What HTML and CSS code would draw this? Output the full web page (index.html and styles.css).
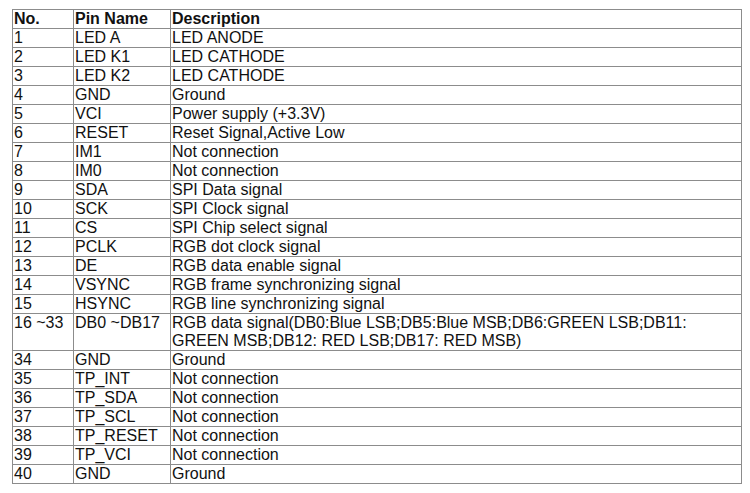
FILE: index.html
```html
<!DOCTYPE html>
<html>
<head>
<meta charset="utf-8">
<link rel="stylesheet" href="styles.css">
</head>
<body>
<div class="page">
<table class="pins">
<colgroup><col class="c-no"><col class="c-name"><col class="c-desc"></colgroup>
<thead>
<tr><th>No.</th><th>Pin Name</th><th>Description</th></tr>
</thead>
<tbody>
<tr><td>1</td><td>LED A</td><td>LED ANODE</td></tr>
<tr><td>2</td><td>LED K1</td><td>LED CATHODE</td></tr>
<tr><td>3</td><td>LED K2</td><td>LED CATHODE</td></tr>
<tr><td>4</td><td>GND</td><td>Ground</td></tr>
<tr><td>5</td><td>VCI</td><td>Power supply (+3.3V)</td></tr>
<tr><td>6</td><td>RESET</td><td>Reset Signal,Active Low</td></tr>
<tr><td>7</td><td>IM1</td><td>Not connection</td></tr>
<tr><td>8</td><td>IM0</td><td>Not connection</td></tr>
<tr><td>9</td><td>SDA</td><td>SPI Data signal</td></tr>
<tr><td>10</td><td>SCK</td><td>SPI Clock signal</td></tr>
<tr><td>11</td><td>CS</td><td>SPI Chip select signal</td></tr>
<tr><td>12</td><td>PCLK</td><td>RGB dot clock signal</td></tr>
<tr><td>13</td><td>DE</td><td>RGB data enable signal</td></tr>
<tr><td>14</td><td>VSYNC</td><td>RGB frame synchronizing signal</td></tr>
<tr><td>15</td><td>HSYNC</td><td>RGB line synchronizing signal</td></tr>
<tr><td>16 ~33</td><td>DB0 ~DB17</td><td>RGB data signal(DB0:Blue LSB;DB5:Blue MSB;DB6:GREEN LSB;DB11:<br>GREEN MSB;DB12: RED LSB;DB17: RED MSB)</td></tr>
<tr><td>34</td><td>GND</td><td>Ground</td></tr>
<tr><td>35</td><td>TP_INT</td><td>Not connection</td></tr>
<tr><td>36</td><td>TP_SDA</td><td>Not connection</td></tr>
<tr><td>37</td><td>TP_SCL</td><td>Not connection</td></tr>
<tr><td>38</td><td>TP_RESET</td><td>Not connection</td></tr>
<tr><td>39</td><td>TP_VCI</td><td>Not connection</td></tr>
<tr><td>40</td><td>GND</td><td>Ground</td></tr>
</tbody>
</table>
</div>
</body>
</html>
```

FILE: styles.css
```css
html, body {
  margin: 0;
  padding: 0;
  background: #ffffff;
}

.page {
  padding: 9px 0 0 12px;
}

.pins {
  border-collapse: collapse;
  table-layout: fixed;
  width: 729px;
  font-family: "Liberation Sans", Arial, sans-serif;
  font-size: 16px;
  line-height: 18px;
  color: #111111;
}

.c-no { width: 61px; }
.c-name { width: 97px; }
.c-desc { width: 571px; }

.pins th,
.pins td {
  border: 1px solid #8c8c8c;
  padding: 0 0 0 1px;
  text-align: left;
  vertical-align: top;
  white-space: nowrap;
}

.pins th {
  font-weight: bold;
}
```
